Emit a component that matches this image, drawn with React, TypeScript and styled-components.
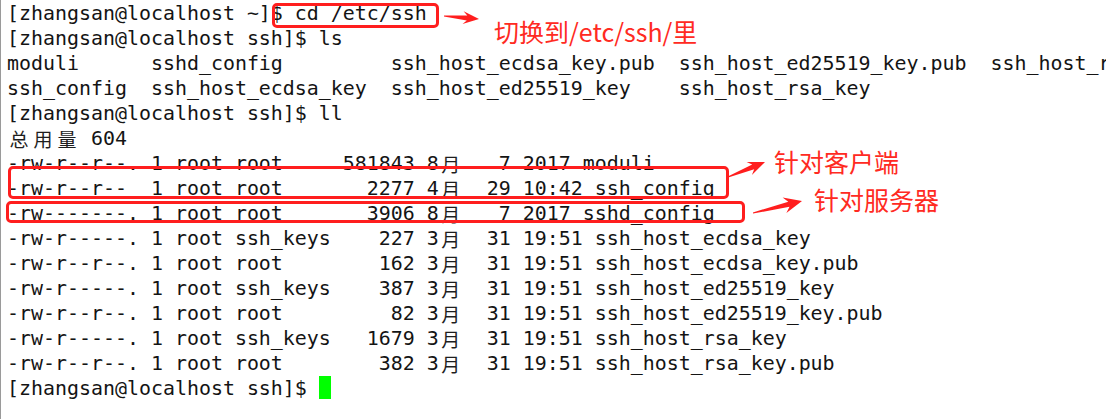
import React from "react";
import styled, { createGlobalStyle } from "styled-components";

const Global = createGlobalStyle`
  html, body { margin: 0; padding: 0; background: #ffffff; }
  #root { width: 1106px; height: 419px; overflow: hidden; }
`;

const Screen = styled.div`
  position: relative;
  width: 1106px;
  height: 419px;
  box-sizing: border-box;
  overflow: hidden;
  background: #ffffff;
  border-left: 1px solid #9a9a9a;
`;

const Terminal = styled.div`
  display: flex;
  flex-direction: column;
  padding: 1px 0 0 6px;
  font-family: "DejaVu Sans Mono", "Liberation Mono", monospace;
  font-size: 19.93px;
  color: #141414;
`;

const Line = styled.div`
  height: 25px;
  line-height: 25px;
  white-space: pre;
`;

const Wide = styled.span`
  display: inline-block;
  width: 24px;
  height: 25px;
  line-height: 25px;
  vertical-align: top;
  text-align: center;
  font-family: "Noto Sans CJK SC", sans-serif;
  font-size: 19px;
  color: #1e1e1e;
`;

const Cursor = styled.span`
  display: inline-block;
  width: 12px;
  height: 23px;
  vertical-align: top;
  background: #00ff00;
`;

const Highlight = styled.div<{ $x: number; $y: number; $w: number; $h: number }>`
  position: absolute;
  left: ${(p) => p.$x}px;
  top: ${(p) => p.$y}px;
  width: ${(p) => p.$w}px;
  height: ${(p) => p.$h}px;
  box-sizing: border-box;
  border: 3px solid #ff1e1e;
  border-radius: 5px;
`;

const Note = styled.div<{ $x: number; $y: number }>`
  position: absolute;
  left: ${(p) => p.$x}px;
  top: ${(p) => p.$y}px;
  font-family: "Noto Sans CJK SC", sans-serif;
  font-size: 25px;
  line-height: 25px;
  color: #ff2a22;
  white-space: nowrap;
`;

const ArrowLayer = styled.svg`
  position: absolute;
  left: 0;
  top: 0;
  width: 1106px;
  height: 419px;
  pointer-events: none;
`;

type ArrowSpec = { x1: number; y1: number; x2: number; y2: number; len: number; hw: number };

function arrowPoints(a: ArrowSpec): string {
  const dx = a.x2 - a.x1;
  const dy = a.y2 - a.y1;
  const d = Math.hypot(dx, dy);
  const ux = dx / d;
  const uy = dy / d;
  const nx = -uy;
  const ny = ux;
  const p = (bx: number, by: number, s: number) => `${(bx + nx * s).toFixed(1)},${(by + ny * s).toFixed(1)}`;
  const bX = a.x2 - ux * a.len * 0.75;
  const bY = a.y2 - uy * a.len * 0.75;
  const hX = a.x2 - ux * a.len;
  const hY = a.y2 - uy * a.len;
  return [
    p(a.x1, a.y1, 0.6),
    p(bX, bY, 2.6),
    p(hX, hY, a.hw),
    `${a.x2},${a.y2}`,
    p(hX, hY, -a.hw),
    p(bX, bY, -2.6),
    p(a.x1, a.y1, -0.6),
  ].join(" ");
}

const arrows: ArrowSpec[] = [
  { x1: 443, y1: 16, x2: 478, y2: 19, len: 16, hw: 6.5 },
  { x1: 727, y1: 177, x2: 764, y2: 162, len: 17, hw: 7 },
  { x1: 752, y1: 213, x2: 801, y2: 201, len: 18, hw: 8 },
];

const cols = (items: [string, number][]) => items.map(([s, w]) => s.padEnd(w)).join("");

type Entry = {
  perms: string;
  group: string;
  size: string;
  month: string;
  tail: string;
};

const entries: Entry[] = [
  { perms: "-rw-r--r--.", group: "root", size: "581843", month: "8", tail: "   7 2017 moduli" },
  { perms: "-rw-r--r-- ", group: "root", size: "2277", month: "4", tail: "  29 10:42 ssh_config" },
  { perms: "-rw-------.", group: "root", size: "3906", month: "8", tail: "   7 2017 sshd_config" },
  { perms: "-rw-r-----.", group: "ssh_keys", size: "227", month: "3", tail: "  31 19:51 ssh_host_ecdsa_key" },
  { perms: "-rw-r--r--.", group: "root", size: "162", month: "3", tail: "  31 19:51 ssh_host_ecdsa_key.pub" },
  { perms: "-rw-r-----.", group: "ssh_keys", size: "387", month: "3", tail: "  31 19:51 ssh_host_ed25519_key" },
  { perms: "-rw-r--r--.", group: "root", size: "82", month: "3", tail: "  31 19:51 ssh_host_ed25519_key.pub" },
  { perms: "-rw-r-----.", group: "ssh_keys", size: "1679", month: "3", tail: "  31 19:51 ssh_host_rsa_key" },
  { perms: "-rw-r--r--.", group: "root", size: "382", month: "3", tail: "  31 19:51 ssh_host_rsa_key.pub" },
];

export default function App() {
  return (
    <>
      <Global />
      <Screen>
        <Terminal>
          <Line>{"[zhangsan@localhost ~]$ cd /etc/ssh"}</Line>
          <Line>{"[zhangsan@localhost ssh]$ ls"}</Line>
          <Line>
            {cols([
              ["moduli", 12],
              ["sshd_config", 20],
              ["ssh_host_ecdsa_key.pub", 24],
              ["ssh_host_ed25519_key.pub", 26],
              ["ssh_host_rsa_key.pub", 20],
            ])}
          </Line>
          <Line>
            {cols([
              ["ssh_config", 12],
              ["ssh_host_ecdsa_key", 20],
              ["ssh_host_ed25519_key", 24],
              ["ssh_host_rsa_key", 16],
            ])}
          </Line>
          <Line>{"[zhangsan@localhost ssh]$ ll"}</Line>
          <Line>
            <Wide>总</Wide>
            <Wide>用</Wide>
            <Wide>量</Wide>
            {" 604"}
          </Line>
          {entries.map((e) => (
            <Line key={e.tail}>
              {`${e.perms} 1 root ${e.group.padEnd(8)} ${e.size.padStart(6)} ${e.month}`}
              <Wide>月</Wide>
              {e.tail}
            </Line>
          ))}
          <Line>
            {"[zhangsan@localhost ssh]$ "}
            <Cursor />
          </Line>
        </Terminal>

        <Highlight $x={271} $y={3} $w={167} $h={25} />
        <Highlight $x={7} $y={166} $w={721} $h={33} />
        <Highlight $x={5} $y={201} $w={739} $h={22} />

        <ArrowLayer viewBox="0 0 1106 419">
          {arrows.map((a, i) => (
            <polygon key={i} points={arrowPoints(a)} fill="#ff1e1e" />
          ))}
        </ArrowLayer>

        <Note $x={493} $y={19}>切换到/etc/ssh/里</Note>
        <Note $x={773} $y={149}>针对客户端</Note>
        <Note $x={813} $y={187}>针对服务器</Note>
      </Screen>
    </>
  );
}
